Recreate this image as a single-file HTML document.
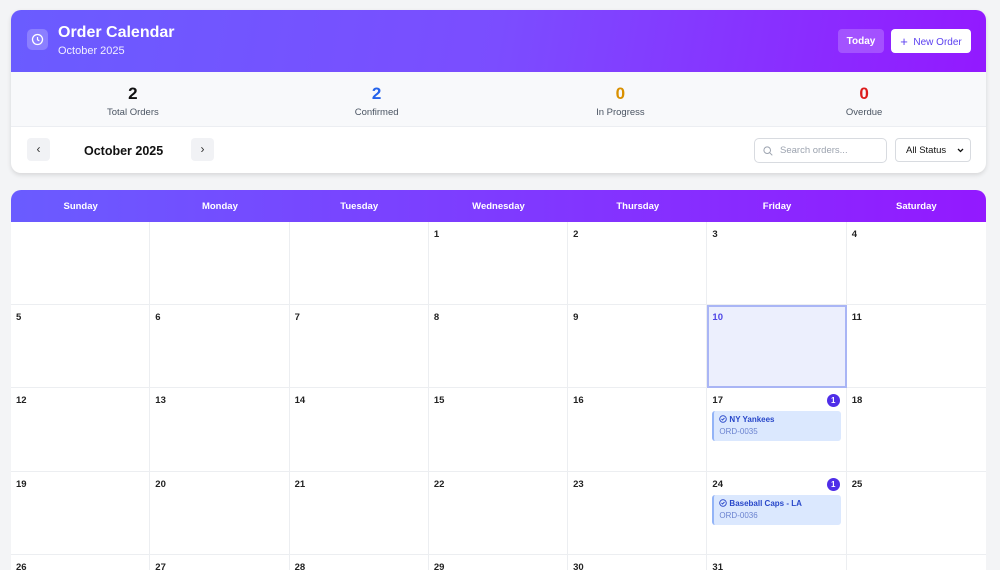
<!DOCTYPE html>
<html><head><meta charset="utf-8"><style>
*{box-sizing:border-box;margin:0;padding:0}
html,body{width:1000px;height:570px;overflow:hidden}
body{background:#f3f4f6;font-family:"Liberation Sans",Arial,sans-serif;position:relative}
.card1{position:absolute;left:11px;top:10px;width:975px;height:163px;background:#fff;border-radius:10px;box-shadow:0 2px 5px rgba(0,0,0,.12);overflow:hidden}
.hdr{height:62px;background:linear-gradient(100deg,#6a5cff,#7b4dff 50%,#9319ff);position:relative;color:#fff}
.ic{position:absolute;left:16px;top:19px;width:21px;height:21px;border-radius:5px;background:rgba(255,255,255,.22)}
.t1{position:absolute;left:47px;top:14px;font-size:16px;font-weight:bold}
.t2{position:absolute;left:47px;top:35px;font-size:11px;opacity:.9}
.today{position:absolute;left:827px;top:19px;width:46px;height:24px;border-radius:4px;background:rgba(255,255,255,.2);font-size:10px;font-weight:bold;text-align:center;line-height:25px}
.new{position:absolute;left:880px;top:19px;width:80px;height:24px;border-radius:4px;background:#fff;color:#5b3ff0;font-size:10px;text-align:center;line-height:25px}
.stats{height:55px;background:#f8f9fb;border-bottom:1px solid #eceef2;display:flex}
.st{flex:1;text-align:center;padding-top:12px}
.st b{display:block;font-size:17px}
.st span{display:block;font-size:9.5px;color:#4b5563;margin-top:3px}
.tb{position:relative;height:46px}
.nb{position:absolute;top:11px;width:23px;height:23px;border-radius:4px;background:#f1f2f5;color:#333;text-align:center;line-height:23px;font-size:12px}
.mt{position:absolute;left:73px;top:17px;font-size:12.5px;font-weight:bold;color:#111}
.srch{position:absolute;left:743px;top:11px;width:133px;height:25px;border:1px solid #d8dbe0;border-radius:5px;font-size:9.5px;color:#9ca3af;line-height:24px;padding-left:25px}
.sel{position:absolute;left:884px;top:11px;width:76px;height:24px;border:1px solid #d8dbe0;border-radius:4px;font-size:9.5px;color:#111;line-height:24px;padding-left:10px}
.cal{position:absolute;left:11px;top:190px;width:975px;height:380px;background:#fff;border-radius:10px 10px 0 0;overflow:hidden}
.ch{height:32px;background:linear-gradient(90deg,#6a5cff,#9319ff);display:flex;color:#fff;font-size:9.5px;font-weight:bold}
.ch div{flex:1;text-align:center;line-height:33px}
.g{display:grid;grid-template-columns:repeat(7,1fr);grid-auto-rows:83.2px}
.c{border-right:1px solid #eceef1;border-bottom:1px solid #eceef1;position:relative;padding:7px 5px;font-size:9.5px;font-weight:bold;color:#222}
.c:nth-child(7n){border-right:none}
.tod{background:#eceffd;outline:2px solid #a9b5f5;outline-offset:-2px;color:#4f46e5}
.bd{position:absolute;right:6px;top:6px;width:13px;height:13px;border-radius:50%;background:#4f2ee8;color:#fff;font-size:8px;text-align:center;line-height:13px}
.ev{margin-top:5px;background:#dbe8fe;border-left:2px solid #93b4f7;border-radius:3px;height:30px;padding:4px 5px;color:#2847c9;font-size:8px}
.ev svg{vertical-align:-1px;margin-right:2px}
.ev i{display:block;font-style:normal;font-weight:normal;color:#6b83d0;margin-top:3px}
</style></head><body>
<div class="card1">
 <div class="hdr">
  <div class="ic"><svg width="21" height="21" viewBox="0 0 21 21"><circle cx="10.5" cy="10.5" r="5" fill="none" stroke="#fff" stroke-width="1.3"/><path d="M10.5 8v2.8l1.8 1" fill="none" stroke="#fff" stroke-width="1.2"/></svg></div>
  <div class="t1">Order Calendar</div><div class="t2">October 2025</div>
  <div class="today">Today</div><div class="new"><span style="font-size:13px;vertical-align:-1px">+</span>&nbsp; New Order</div>
 </div>
 <div class="stats">
  <div class="st"><b style="color:#111">2</b><span>Total Orders</span></div>
  <div class="st"><b style="color:#2563eb">2</b><span>Confirmed</span></div>
  <div class="st"><b style="color:#d99000">0</b><span>In Progress</span></div>
  <div class="st"><b style="color:#dc1c1c">0</b><span>Overdue</span></div>
 </div>
 <div class="tb">
  <div class="nb" style="left:16px">‹</div><div class="mt">October 2025</div><div class="nb" style="left:180px">›</div>
  <div class="srch"><svg style="position:absolute;left:8px;top:7px" width="10" height="10" viewBox="0 0 10 10"><circle cx="4.2" cy="4.2" r="3.3" fill="none" stroke="#9ca3af" stroke-width="1"/><path d="M6.7 6.7L9.3 9.3" stroke="#9ca3af"/></svg>Search orders...</div>
  <div class="sel">All Status<svg style="position:absolute;right:6px;top:9px" width="7" height="5" viewBox="0 0 7 5"><path d="M1 1l2.5 2.5L6 1" fill="none" stroke="#111" stroke-width="1.3"/></svg></div>
 </div>
</div>
<div class="cal">
 <div class="ch"><div>Sunday</div><div>Monday</div><div>Tuesday</div><div>Wednesday</div><div>Thursday</div><div>Friday</div><div>Saturday</div></div>
 <div class="g">
  <div class="c"></div><div class="c"></div><div class="c"></div><div class="c">1</div><div class="c">2</div><div class="c">3</div><div class="c">4</div>
  <div class="c">5</div><div class="c">6</div><div class="c">7</div><div class="c">8</div><div class="c">9</div><div class="c tod">10</div><div class="c">11</div>
  <div class="c">12</div><div class="c">13</div><div class="c">14</div><div class="c">15</div><div class="c">16</div><div class="c">17<div class="bd">1</div><div class="ev"><svg width="8" height="8" viewBox="0 0 8 8"><circle cx="4" cy="4" r="3.3" fill="none" stroke="#2847c9" stroke-width=".9"/><path d="M2.5 4l1 1 2-2" fill="none" stroke="#2847c9" stroke-width=".9"/></svg>NY Yankees<i>ORD-0035</i></div></div><div class="c">18</div>
  <div class="c">19</div><div class="c">20</div><div class="c">21</div><div class="c">22</div><div class="c">23</div><div class="c">24<div class="bd">1</div><div class="ev"><svg width="8" height="8" viewBox="0 0 8 8"><circle cx="4" cy="4" r="3.3" fill="none" stroke="#2847c9" stroke-width=".9"/><path d="M2.5 4l1 1 2-2" fill="none" stroke="#2847c9" stroke-width=".9"/></svg>Baseball Caps - LA<i>ORD-0036</i></div></div><div class="c">25</div>
  <div class="c">26</div><div class="c">27</div><div class="c">28</div><div class="c">29</div><div class="c">30</div><div class="c">31</div><div class="c"></div>
 </div>
</div>
</body></html>
